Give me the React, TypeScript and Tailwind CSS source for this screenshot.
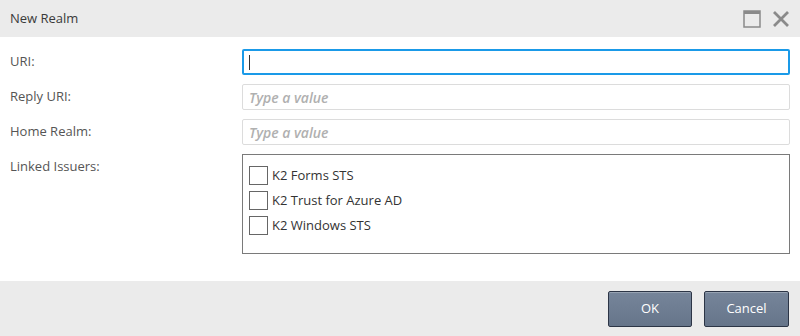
import React from "react";

const font = { fontFamily: '"Open Sans", "Noto Sans", sans-serif' };

function Check({ label }: { label: string }) {
  return (
    <div className="flex items-center h-[25px]">
      <div className="w-[19px] h-[19px] border border-[#666] bg-white" />
      <span className="ml-[4px] text-[13px] text-[#333]">{label}</span>
    </div>
  );
}

export default function App() {
  return (
    <div className="w-[800px] h-[336px] flex flex-col bg-white" style={font}>
      <div className="h-[37px] bg-[#ebebeb] flex items-center pl-[10px] pr-[10px]">
        <span className="text-[13px] text-[#3a3a3a]">New Realm</span>
        <div className="ml-auto flex items-center gap-[11px]">
          <svg width="18" height="18" viewBox="0 0 18 18">
            <rect x="1" y="1" width="16" height="16" fill="none" stroke="#8a8a8a" strokeWidth="1.5" />
            <rect x="1" y="1" width="16" height="3" fill="#8a8a8a" />
          </svg>
          <svg width="18" height="18" viewBox="0 0 18 18">
            <path d="M2 2 L16 16 M16 2 L2 16" stroke="#8a8a8a" strokeWidth="2.8" />
          </svg>
        </div>
      </div>
      <div className="flex-1 pt-[12px] pl-[10px] pr-[10px]">
        <div className="grid grid-cols-[232px_1fr] gap-y-[9px]">
          <div className="h-[26px] flex items-center text-[13px] text-[#555]">URI:</div>
          <div className="h-[26px] border-2 border-[#1a9ae8] rounded-[2px] flex items-center pl-[5px]">
            <div className="w-px h-[15px] bg-[#333]" />
          </div>
          <div className="h-[26px] flex items-center text-[13px] text-[#555]">Reply URI:</div>
          <div className="h-[26px] border border-[#dcdcdc] rounded-[2px] flex items-center pl-[6px] text-[14px] font-semibold italic text-[#b0b0b0]">Type a value</div>
          <div className="h-[26px] flex items-center text-[13px] text-[#555]">Home Realm:</div>
          <div className="h-[26px] border border-[#dcdcdc] rounded-[2px] flex items-center pl-[6px] text-[14px] font-semibold italic text-[#b0b0b0]">Type a value</div>
          <div className="pt-[3px] text-[13px] text-[#555]">Linked Issuers:</div>
          <div className="h-[100px] border border-[#7a7a7a] pt-[8px] pl-[6px]">
            <Check label="K2 Forms STS" />
            <Check label="K2 Trust for Azure AD" />
            <Check label="K2 Windows STS" />
          </div>
        </div>
      </div>
      <div className="h-[55px] bg-[#ebebeb] flex items-center justify-end gap-[12px] pr-[11px] pt-px">
        <button className="w-[84px] h-[36px] bg-gradient-to-b from-[#76859a] to-[#66758a] border border-[#2c3546] rounded-[2px] text-white text-[13px] shadow-[inset_0_1px_0_rgba(255,255,255,0.25)]">OK</button>
        <button className="w-[85px] h-[36px] bg-gradient-to-b from-[#76859a] to-[#66758a] border border-[#2c3546] rounded-[2px] text-white text-[13px] shadow-[inset_0_1px_0_rgba(255,255,255,0.25)]">Cancel</button>
      </div>
    </div>
  );
}
